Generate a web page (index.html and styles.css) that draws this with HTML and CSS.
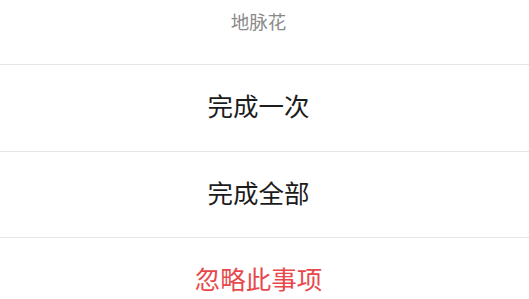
FILE: index.html
```html
<!DOCTYPE html>
<html lang="zh-CN">

<head>
  <meta charset="UTF-8" />
  <meta name="viewport" content="width=device-width, initial-scale=1.0" />
  <title>操作菜单</title>
  <link rel="stylesheet" href="styles.css">
</head>

<body>
  <!-- 底部操作菜单 -->
  <div class="sheet">
    <div class="sheet-title">地脉花</div>
    <ul class="sheet-list">
      <li class="sheet-item">完成一次</li>
      <li class="sheet-item">完成全部</li>
      <li class="sheet-item danger">忽略此事项</li>
    </ul>
  </div>
</body>

</html>
```

FILE: styles.css
```css
* {
  margin: 0;
  padding: 0;
}

ul {
  list-style: none;
}

html,
body {
  overflow: hidden;
}

body {
  background: #fff;
  font-family: "Noto Sans CJK SC", "Noto Sans", sans-serif;
}

.sheet {
  width: 529px;
}

.sheet-title {
  height: 42px;
  line-height: 42px;
  padding-bottom: 22px;
  padding-right: 12px;
  text-align: center;
  font-size: 18.5px;
  color: #8a8a8a;
}

.sheet-item {
  height: 85.5px;
  line-height: 79px;
  border-top: 1px solid #e6e6e6;
  padding-right: 12px;
  text-align: center;
  font-size: 25.5px;
  color: #1c1c1c;
}

.sheet-item.danger {
  color: #e8484b;
}
```
